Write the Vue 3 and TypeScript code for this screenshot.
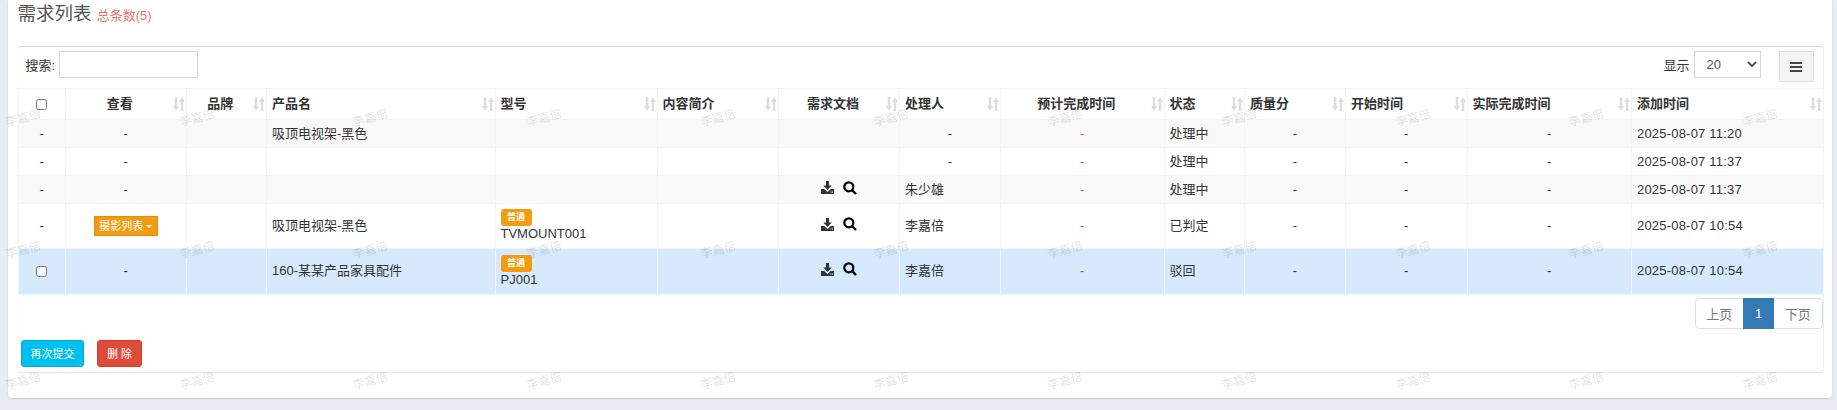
<script setup lang="ts">
interface Col { title: string; w: number; center: boolean }
interface Row {
  h: string; sel?: boolean; check?: boolean; view: string; dropdown?: boolean; product: string;
  tag?: string; docs?: boolean; person: string; status: string; time: string;
}
const cols: Col[] = [
  { title: '查看', w: 120.5, center: true },
  { title: '品牌', w: 80.5, center: true },
  { title: '产品名', w: 228.5, center: false },
  { title: '型号', w: 162, center: false },
  { title: '内容简介', w: 121.5, center: false },
  { title: '需求文档', w: 121, center: true },
  { title: '处理人', w: 101, center: false },
  { title: '预计完成时间', w: 163.5, center: true },
  { title: '状态', w: 80.5, center: false },
  { title: '质量分', w: 101, center: false },
  { title: '开始时间', w: 121.5, center: false },
  { title: '实际完成时间', w: 164.5, center: false },
  { title: '添加时间', w: 191.5, center: false },
]
const rows: Row[] = [
  { h: 'r1', view: '-', product: '吸顶电视架-黑色', person: '-', status: '处理中', time: '2025-08-07 11:20' },
  { h: 'r2', view: '-', product: '', person: '-', status: '处理中', time: '2025-08-07 11:37' },
  { h: 'r2', view: '-', product: '', docs: true, person: '朱少雄', status: '处理中', time: '2025-08-07 11:37' },
  { h: 'r4', view: '', dropdown: true, product: '吸顶电视架-黑色', tag: 'TVMOUNT001', docs: true, person: '李嘉倍', status: '已判定', time: '2025-08-07 10:54' },
  { h: 'r5', sel: true, check: true, view: '-', product: '160-某某产品家具配件', tag: 'PJ001', docs: true, person: '李嘉倍', status: '驳回', time: '2025-08-07 10:54' },
]
const marks = Array.from({ length: 33 }, (_, i) => i)
</script>

<template>
  <div class="page">
    <section class="panel">
      <h1 class="title">需求列表 <small>总条数(5)</small></h1>
      <div class="box">
        <div class="toolbar">
          <label class="search">搜索: <input type="text" /></label>
          <div class="tools">
            <label class="size">显示
              <select><option>20</option></select>
            </label>
            <button class="menu" type="button" aria-label="菜单">
              <svg width="12" height="10" viewBox="0 0 12 10"><path d="M0 0h12v2H0zM0 4h12v2H0zM0 8h12v2H0z" fill="#444" /></svg>
            </button>
          </div>
        </div>
        <table>
          <colgroup>
            <col style="width: 47.5px" />
            <col v-for="c in cols" :key="c.title" :style="{ width: c.w + 'px' }" />
          </colgroup>
          <thead>
            <tr>
              <th class="chk"><input type="checkbox" /></th>
              <th v-for="c in cols" :key="c.title">
                <div class="th">
                  <span class="label" :class="{ mid: c.center }">{{ c.title }}</span>
                  <svg class="sort" width="12" height="14" viewBox="0 0 12 14">
                    <path d="M1.800 0h2.400v9h1.800L3 14 0 9h1.800zM7.800 14h2.400V5H12L9 0 6 5h1.800z" fill="#ddd" />
                  </svg>
                </div>
              </th>
            </tr>
          </thead>
          <tbody>
            <tr v-for="(r, i) in rows" :key="i" :class="[r.h, { sel: r.sel, odd: i % 2 === 0 && !r.sel }]">
              <td class="mid"><input v-if="r.check" type="checkbox" /><template v-else>-</template></td>
              <td class="mid">
                <span v-if="r.dropdown" class="drop">摄影列表<i class="caret"></i></span>
                <template v-else>{{ r.view }}</template>
              </td>
              <td></td>
              <td>{{ r.product }}</td>
              <td><template v-if="r.tag"><span class="badge">普通</span><div>{{ r.tag }}</div></template></td>
              <td></td>
              <td class="mid">
                <span v-if="r.docs" class="icons">
                  <svg width="14" height="13" viewBox="0 0 14 13"><path d="M5 0h3v4.500h2.800L6.500 9 2.200 4.500H5zM0 8h3.200l3.300 3 3.300-3H13v5H0z" fill="#333" /><path d="M9.500 10.500h1v1h-1zM11 10.500h1v1h-1z" fill="#fff" /></svg>
                  <svg width="14" height="14" viewBox="0 0 14 14"><circle cx="5.800" cy="5.800" r="4.500" fill="none" stroke="#000" stroke-width="2.200" /><path d="M9 9l4 4" stroke="#000" stroke-width="2.400" /></svg>
                </span>
              </td>
              <td :class="{ mid: r.person === '-' }">{{ r.person }}</td>
              <td class="mid red">-</td>
              <td>{{ r.status }}</td>
              <td class="mid">-</td>
              <td class="mid">-</td>
              <td class="mid">-</td>
              <td class="time">{{ r.time }}</td>
            </tr>
          </tbody>
        </table>
        <div class="pager-row">
          <nav class="pager">
            <a>上页</a><a class="on">1</a><a>下页</a>
          </nav>
        </div>
        <div class="actions">
          <button type="button" class="btn info">再次提交</button>
          <button type="button" class="btn danger">删 除</button>
        </div>
      </div>
    </section>
    <div class="marks" aria-hidden="true">
      <div class="marks-grid">
        <span v-for="m in marks" :key="m">李嘉倍</span>
      </div>
    </div>
  </div>
</template>

<style scoped>
.page {
  position: relative;
  height: 410px;
  overflow: hidden;
  background: #e9edf3;
  padding: 0 5px 0 8px;
  box-sizing: border-box;
  font-family: "Liberation Sans", "Noto Sans CJK SC", sans-serif;
  font-size: 13px;
  color: #333;
}
.panel {
  height: 398px;
  box-sizing: border-box;
  background: #fff;
  border-radius: 0 0 4px 4px;
  box-shadow: 0 1px 2px rgba(0, 0, 0, 0.15);
  padding: 0 9.500px;
}
.title {
  margin: 0;
  height: 46px;
  padding-top: 3px;
  box-sizing: border-box;
  font-size: 18.500px;
  font-weight: 400;
  line-height: 22px;
  color: #555;
}
.title small {
  font-size: 13px;
  color: #ea7468;
}
.box {
  height: 325.500px;
  box-sizing: border-box;
  border-top: 1px solid #d2d6de;
  border-radius: 3px;
  box-shadow: 0 1px 1px rgba(0, 0, 0, 0.12), 1px 0 0 #f4f4f4;
}
.toolbar {
  height: 41px;
  box-sizing: border-box;
  display: flex;
  justify-content: space-between;
  align-items: flex-start;
  padding: 4px 9px 0 8px;
}
.search { display: flex; align-items: center; gap: 4px; height: 27px; }
.search input {
  width: 139px;
  height: 27px;
  box-sizing: border-box;
  border: 1px solid #d2d6de;
  outline: 0;
  padding: 0;
}
.tools { display: flex; gap: 18px; }
.size { display: flex; align-items: center; gap: 4px; height: 27px; }
.size select {
  width: 67px;
  height: 27px;
  box-sizing: border-box;
  border: 1px solid #d2d6de;
  background: #fff;
  font: inherit;
  color: #555;
  padding: 0 8px;
}
.menu {
  width: 35px;
  height: 31px;
  box-sizing: border-box;
  padding: 0;
  background: #f4f4f4;
  border: 1px solid #ddd;
  display: flex;
  align-items: center;
  justify-content: center;
}
table {
  width: 1805px;
  table-layout: fixed;
  border-collapse: collapse;
  border: 1px solid #f4f4f4;
}
th, td {
  border: 1px solid #f4f4f4;
  padding: 0 5px;
  vertical-align: middle;
  text-align: left;
  line-height: 16px;
}
th {
  height: 30px;
  padding: 0 1px 0 5px;
  text-align: left;
  font-weight: 700;
  font-size: 13px;
  color: #333;
}
th.chk { padding: 0; text-align: center; }
input[type="checkbox"] { margin: 0; vertical-align: middle; width: 11px; height: 11px; }
.th { display: flex; align-items: center; gap: 4px; }
.label { flex: 1; min-width: 0; white-space: nowrap; }
.label.mid { text-align: center; }
.sort { flex: none; }
td.mid { text-align: center; }
td.red { color: #dd4b39; }
td.time { letter-spacing: 0.2px; }
.odd td { background: #f9f9f9; }
.r1 { height: 28px; }
.r2 { height: 28px; }
.r4 { height: 44.500px; }
.r5 { height: 46px; }
.sel td {
  background: #d6e9fd;
  border-color: #eef5fd;
}
.badge {
  display: inline-block;
  width: 31px;
  height: 17px;
  line-height: 17px;
  text-align: center;
  background: #f39c12;
  border-radius: 3px;
  color: #fff;
  font-size: 9px;
  font-weight: 700;
  vertical-align: top;
}
.drop {
  display: inline-flex;
  align-items: center;
  justify-content: center;
  width: 64px;
  height: 20px;
  box-sizing: border-box;
  background: #f39c12;
  border: 1px solid #e08e0b;
  color: #fff;
  font-size: 11px;
}
.caret {
  border-top: 3px solid #fff;
  border-left: 3px solid transparent;
  border-right: 3px solid transparent;
  margin-left: 3px;
  margin-top: 1px;
}
.icons { display: inline-flex; align-items: center; gap: 8px; }
.pager-row {
  display: flex;
  justify-content: flex-end;
  padding-top: 3px;
}
.pager {
  display: flex;
  height: 31px;
  box-sizing: border-box;
  border: 1px solid #ddd;
  border-radius: 4px;
  color: #777;
}
.pager a {
  display: flex;
  align-items: center;
  justify-content: center;
  width: 47.500px;
}
.pager a.on {
  width: 31px;
  margin: -1px 0;
  background: #337ab7;
  color: #fff;
}
.actions {
  display: flex;
  gap: 13px;
  padding: 11px 0 0 3.500px;
}
.btn {
  height: 27px;
  border-radius: 3px;
  color: #fff;
  font: inherit;
  font-size: 11px;
  padding: 0;
}
.btn.info { width: 63px; background: #00c0ef; border: 1px solid #00acd6; }
.btn.danger { width: 45px; background: #dd4b39; border: 1px solid #d73925; }
.marks {
  position: absolute;
  inset: 0;
  overflow: hidden;
  pointer-events: none;
}
.marks-grid {
  display: grid;
  grid-template-columns: repeat(11, 173.700px);
  grid-auto-rows: 131.500px;
  margin: 51px 0 0 -64px;
  width: 1911px;
}
.marks-grid span {
  display: flex;
  align-items: center;
  justify-content: center;
  transform: rotate(-15deg);
  color: rgba(0, 0, 0, 0.13);
  font-size: 12px;
}
</style>

<style>
html, body { margin: 0; height: 410px; overflow: hidden; }
</style>
